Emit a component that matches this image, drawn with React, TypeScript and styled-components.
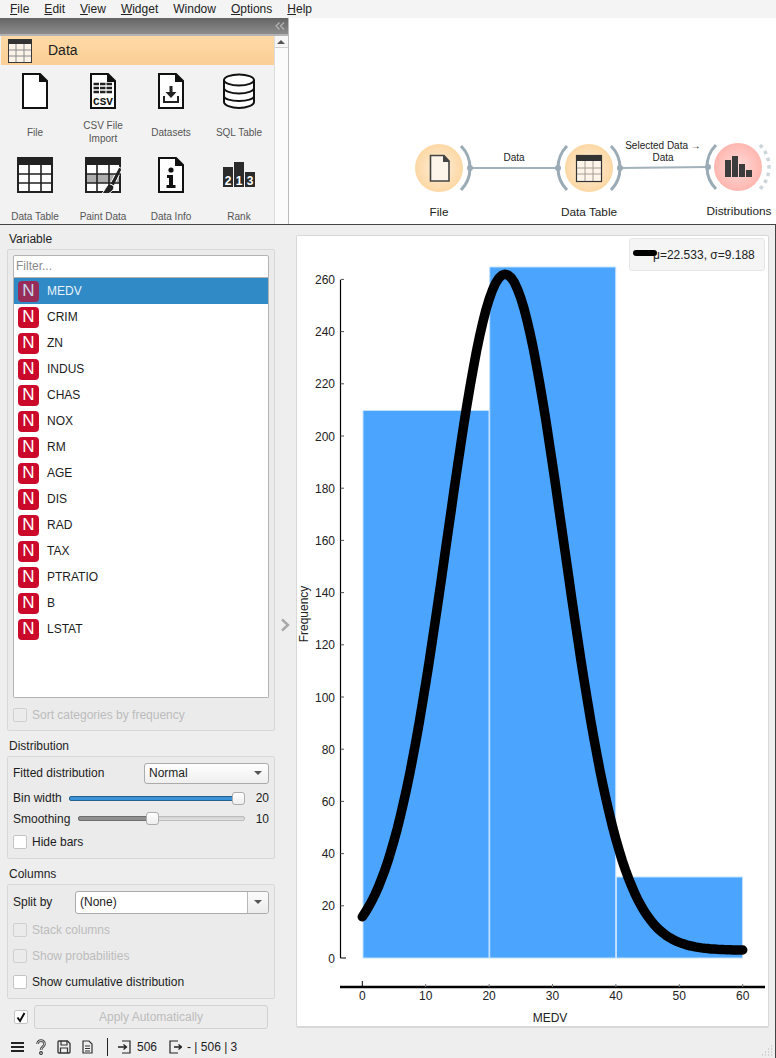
import React from 'react';
import styled, { createGlobalStyle } from 'styled-components';

const GlobalStyle = createGlobalStyle`
  html, body {
    margin: 0;
    padding: 0;
    width: 776px;
    height: 1058px;
    overflow: hidden;
    background: #eeeeee;
    font-family: "Liberation Sans", Arial, sans-serif;
    color: #1a1a1a;
  }
  * { box-sizing: border-box; }
`;

const Page = styled.div`
  width: 776px;
  height: 1058px;
  display: flex;
  flex-direction: column;
  overflow: hidden;
`;

/* ---------- menu ---------- */
const MenuBar = styled.div`
  height: 18px;
  flex: none;
  display: flex;
  align-items: center;
  gap: 15px;
  padding: 0 0 1px 10px;
  background: #f4f4f4;
  font-size: 12px;
  color: #222;
`;

const Mnemonic = styled.span`
  text-decoration: underline;
  text-underline-offset: 1px;
`;

/* ---------- main window: toolbox + canvas ---------- */
const MainRow = styled.div`
  height: 206px;
  flex: none;
  display: flex;
`;

const Dock = styled.div`
  width: 288px;
  flex: none;
  display: flex;
  flex-direction: column;
  background: #f2f2f2;
`;

const DockTitle = styled.div`
  height: 16px;
  flex: none;
  display: flex;
  align-items: center;
  justify-content: flex-end;
  padding-right: 3px;
  background: linear-gradient(#646464, #8a8a8a);
  border-bottom: 1px solid #8a8a8a;
`;

const DockBody = styled.div`
  flex: 1;
  min-height: 0;
  display: flex;
  padding-top: 2px;
  padding-left: 1px;
  background: linear-gradient(#b4b4b4 0, #b4b4b4 2px, #f2f2f2 2px);
`;

const DockContent = styled.div`
  width: 273px;
  flex: none;
  display: flex;
  flex-direction: column;
  overflow: hidden;
`;

const CategoryHeader = styled.div`
  height: 29px;
  flex: none;
  display: flex;
  align-items: center;
  gap: 16px;
  padding-left: 7px;
  background: linear-gradient(#ffd9a6, #fbcf96);
  font-size: 14px;
  color: #1c1c1c;
`;

const CategoryName = styled.span`
  margin-bottom: 2px;
`;

const WidgetGrid = styled.div`
  display: grid;
  grid-template-columns: repeat(4, 68px);
  grid-auto-rows: 84px;
`;

const WidgetButton = styled.div`
  position: relative;
  display: flex;
  flex-direction: column;
  align-items: center;
  padding-top: 8px;
`;

const WidgetLabel = styled.div`
  width: 62px;
  height: 32px;
  margin-top: 7px;
  display: flex;
  align-items: center;
  justify-content: center;
  text-align: center;
  font-size: 10px;
  line-height: 13px;
  color: #555;
`;

const Scrollbar = styled.div`
  width: 14px;
  flex: none;
  background: #fbfbfb;
  border-left: 1px solid #dcdcdc;
`;

const ScrollUp = styled.div`
  height: 12px;
  display: flex;
  align-items: center;
  justify-content: center;
  padding-right: 2px;
  background: #f6f6f6;
  border-bottom: 1px solid #d0d0d0;
`;

const ArrowUp = styled.div`
  width: 0;
  height: 0;
  border-left: 4px solid transparent;
  border-right: 4px solid transparent;
  border-bottom: 4px solid #555;
`;

const Canvas = styled.div`
  position: relative;
  flex: 1;
  background: #ffffff;
  border-left: 1px solid #bdbdbd;
  overflow: hidden;
`;

const LinkLayer = styled.svg`
  position: absolute;
  left: 0;
  top: 0;
`;

const LinkLabel = styled.div<{ $x: number; $y: number }>`
  position: absolute;
  left: ${(p) => p.$x}px;
  top: ${(p) => p.$y}px;
  transform: translateX(-50%);
  text-align: center;
  white-space: nowrap;
  font-size: 10px;
  line-height: 12px;
  color: #222;
`;

const NodeTitle = styled.div<{ $x: number; $y: number }>`
  position: absolute;
  left: ${(p) => p.$x}px;
  top: ${(p) => p.$y}px;
  transform: translateX(-50%);
  white-space: nowrap;
  font-size: 11.8px;
  line-height: 14px;
  color: #222;
`;

/* ---------- widget window ---------- */
const WidgetWindow = styled.div`
  flex: 1;
  min-height: 0;
  display: flex;
  flex-direction: column;
  background: #eeeeee;
  border-top: 1px solid #444;
  border-right: 1px solid #444;
`;

const WidgetMain = styled.div`
  flex: 1;
  min-height: 0;
  display: flex;
`;

const ControlArea = styled.div`
  width: 275px;
  flex: none;
  display: flex;
  flex-direction: column;
  padding: 6px 0 0 7px;
`;

const SectionTitle = styled.div`
  height: 17px;
  flex: none;
  padding: 0 0 2px 2px;
  display: flex;
  align-items: center;
  font-size: 12px;
  color: #222;
`;

const GroupBox = styled.div<{ $height: number }>`
  height: ${(p) => p.$height}px;
  flex: none;
  display: flex;
  flex-direction: column;
  padding: 5px 5px 0 5px;
  margin: 1px 0 7px;
  background: #ebebeb;
  border: 1px solid #d8d8d8;
  border-radius: 2px;
`;

const FilterInput = styled.div`
  height: 23px;
  flex: none;
  display: flex;
  align-items: center;
  padding: 0 0 1px 2px;
  background: #fff;
  border: 1px solid #b4b4b4;
  border-radius: 2px 2px 0 0;
  font-size: 12px;
  color: #8a8a8a;
`;

const VariableList = styled.div`
  height: 420px;
  flex: none;
  background: #fff;
  border: 1px solid #b4b4b4;
  border-top: none;
  border-radius: 0 0 2px 2px;
`;

const VariableRow = styled.div<{ $selected?: boolean }>`
  height: 26px;
  display: flex;
  align-items: center;
  gap: 8px;
  padding-left: 4px;
  font-size: 12px;
  background: ${(p) => (p.$selected ? '#2f8ac6' : '#fff')};
  color: ${(p) => (p.$selected ? '#e8f3fb' : '#1c1c1c')};
`;

const TypeBadge = styled.div<{ $selected?: boolean }>`
  width: 21px;
  height: 21px;
  flex: none;
  display: flex;
  align-items: center;
  justify-content: center;
  border-radius: 4px;
  font-family: "Liberation Sans", sans-serif;
  font-size: 17px;
  background: ${(p) => (p.$selected ? '#972c59' : '#cb0a2b')};
  color: ${(p) => (p.$selected ? '#c7d9ea' : '#ffffff')};
`;

const CheckRow = styled.div<{ $disabled?: boolean; $height?: number }>`
  height: ${(p) => p.$height ?? 26}px;
  flex: none;
  display: flex;
  align-items: center;
  gap: 5px;
  font-size: 12px;
  color: ${(p) => (p.$disabled ? '#bcbcbc' : '#1c1c1c')};
`;

const Box = styled.div<{ $disabled?: boolean }>`
  width: 14px;
  height: 14px;
  flex: none;
  display: flex;
  align-items: center;
  justify-content: center;
  border-radius: 2px;
  background: ${(p) => (p.$disabled ? '#ebebeb' : '#ffffff')};
  border: 1px solid ${(p) => (p.$disabled ? '#d0d0d0' : '#c4c4c4')};
`;

const FormRow = styled.div<{ $height: number; $after?: number }>`
  height: ${(p) => p.$height}px;
  margin-bottom: ${(p) => p.$after ?? 0}px;
  flex: none;
  display: flex;
  align-items: center;
  font-size: 12px;
  color: #1c1c1c;
`;

const RowLabel = styled.div<{ $width: number }>`
  width: ${(p) => p.$width}px;
  flex: none;
`;

const Combo = styled.div<{ $white?: boolean }>`
  flex: 1;
  height: ${(p) => (p.$white ? 23 : 21)}px;
  display: flex;
  align-items: center;
  justify-content: space-between;
  padding-left: 4px;
  background: ${(p) => (p.$white ? '#fff' : 'linear-gradient(#fefefe, #efefef)')};
  border: 1px solid #ababab;
  border-radius: 3px;
`;

const ComboArrow = styled.div<{ $divided?: boolean }>`
  width: 21px;
  align-self: stretch;
  display: flex;
  align-items: center;
  justify-content: center;
  background: ${(p) => (p.$divided ? 'linear-gradient(#fbfbfb, #ececec)' : 'transparent')};
  border-left: ${(p) => (p.$divided ? '1px solid #b8b8b8' : 'none')};
  border-radius: 0 3px 3px 0;

  &::after {
    content: '';
    border-left: 4px solid transparent;
    border-right: 4px solid transparent;
    border-top: 4px solid #555;
  }
`;

const SliderTrack = styled.div`
  position: relative;
  flex: 1;
  height: 5px;
  background: linear-gradient(#d0d0d0, #e2e2e2);
  border: 1px solid #bcbcbc;
  border-radius: 2px;
`;

const SliderFill = styled.div<{ $color: string; $edge: string }>`
  height: 5px;
  margin: -1px;
  background: ${(p) => p.$color};
  border: 1px solid ${(p) => p.$edge};
  border-radius: 2px;
`;

const SliderHandle = styled.div`
  position: absolute;
  top: -5px;
  width: 13px;
  height: 13px;
  background: linear-gradient(#ffffff, #eeeeee);
  border: 1px solid #adadad;
  border-radius: 3px;
`;

const SliderValue = styled.div`
  width: 24px;
  flex: none;
  text-align: right;
`;

const ApplyRow = styled.div`
  height: 24px;
  flex: none;
  display: flex;
  align-items: center;
  gap: 6px;
  padding-left: 7px;
  margin-top: -1px;
`;

const ApplyButton = styled.div`
  width: 234px;
  height: 24px;
  display: flex;
  align-items: center;
  justify-content: center;
  background: #ececec;
  border: 1px solid #d2d2d2;
  border-radius: 3px;
  font-size: 12px;
  color: #bcbcbc;
`;

const Splitter = styled.div`
  width: 21px;
  flex: none;
  display: flex;
  align-items: center;
  justify-content: center;
  padding: 0 2px 12px 0;
`;

const ChartColumn = styled.div`
  flex: 1;
  min-width: 0;
  padding: 10px 6px 7px 0;
  display: flex;
`;

const ChartFrame = styled.div`
  position: relative;
  width: 473px;
  height: 793px;
  background: #fff;
  border: 1px solid #d8d8d8;
  border-bottom-width: 2px;
  border-radius: 2px;
`;

const Legend = styled.div`
  position: absolute;
  top: 2px;
  right: 3px;
  width: 136px;
  height: 33px;
  display: flex;
  align-items: center;
  padding-left: 23px;
  background: #f5f5f5;
  border: 1px solid #e6e6e6;
  border-radius: 3px;
  font-size: 12px;
  color: #222;
`;

const LegendLine = styled.div`
  position: absolute;
  left: 3px;
  top: 11px;
  width: 24px;
  height: 6px;
  background: #000;
  border-radius: 3px;
`;

const StatusBar = styled.div`
  position: relative;
  height: 22px;
  flex: none;
  display: flex;
  align-items: center;
  padding-left: 11px;
  font-size: 12px;
  color: #1c1c1c;
`;

const StatusIcon = styled.svg<{ $gap: number }>`
  flex: none;
  margin-right: ${(p) => p.$gap}px;
`;

const StatusDivider = styled.div`
  width: 1px;
  height: 18px;
  flex: none;
  margin-right: 10px;
  background: #222;
`;

const StatusText = styled.span<{ $gap: number }>`
  margin-right: ${(p) => p.$gap}px;
`;

const SizeGrip = styled.svg`
  position: absolute;
  right: 2px;
  bottom: 2px;
`;

/* ---------- icons ---------- */
const Doc = ({ children }: { children?: React.ReactNode }) => (
  <svg width="36" height="36" viewBox="0 0 36 36">
    <path d="M6 1H23L30 8V35H6Z" fill="#fff" stroke="#111" strokeWidth="2" />
    <path d="M22 0L31 9H22Z" fill="#111" />
    {children}
  </svg>
);

const TableIcon = ({ children }: { children?: React.ReactNode }) => (
  <svg width="36" height="36" viewBox="0 0 36 36">
    <rect x="1" y="1" width="34" height="34" fill="#fff" stroke="#222" strokeWidth="2" />
    <rect x="0" y="0" width="36" height="8" fill="#222" />
    {children}
    <path d="M12 8V35M24 8V35M1 17H35M1 26H35" stroke="#222" strokeWidth="1.6" />
  </svg>
);

const icons: Record<string, React.ReactNode> = {
  File: <Doc />,
  CSV: (
    <Doc>
      <path d="M8.5 11H27.5M8.5 15H27.5M8.5 19H27.5" stroke="#222" strokeWidth="2.4" strokeDasharray="5.5 1" />
      <text x="18" y="32" textAnchor="middle" fontSize="11" fontWeight="700" fontFamily="Liberation Mono, monospace" fill="#111">
        CSV
      </text>
    </Doc>
  ),
  Datasets: (
    <Doc>
      <path d="M16.5 13H19.5V19H23.5L18 25L12.5 19H16.5Z" fill="#222" />
      <path d="M11 23V29H25V23" stroke="#222" strokeWidth="2" fill="none" />
    </Doc>
  ),
  SQL: (
    <svg width="36" height="36" viewBox="0 0 36 36">
      <path d="M3 7V29C3 32 10 35 18 35C26 35 33 32 33 29V7" fill="#fff" stroke="#111" strokeWidth="2" />
      <ellipse cx="18" cy="7" rx="15" ry="5.5" fill="#fff" stroke="#111" strokeWidth="2" />
      <path d="M3 15C3 18 10 20.5 18 20.5C26 20.5 33 18 33 15M3 23C3 26 10 28 18 28C26 28 33 26 33 23" fill="none" stroke="#111" strokeWidth="2" />
    </svg>
  ),
  DataTable: <TableIcon />,
  Paint: (
    <TableIcon>
      <rect x="2" y="17" width="32" height="9" fill="#aeaeae" />
      <path d="M25 27L34 10L37 12L29 29Z" fill="#222" stroke="#fff" strokeWidth="1" />
      <path d="M14 38C19 37 20 30 24 27C27 27 29 29 29 31C27 36 20 39 14 38Z" fill="#222" stroke="#fff" strokeWidth="1" />
    </TableIcon>
  ),
  Info: (
    <Doc>
      <circle cx="18" cy="13" r="2.6" fill="#111" />
      <path d="M14 18H20V28H22.5V31H13.5V28H16V21H14Z" fill="#111" />
    </Doc>
  ),
  Rank: (
    <svg width="36" height="36" viewBox="0 0 36 36">
      <rect x="2" y="10" width="10" height="20" fill="#2b2b2b" />
      <rect x="13" y="5" width="10" height="25" fill="#2b2b2b" />
      <rect x="24" y="15" width="10" height="15" fill="#2b2b2b" />
      <g fontSize="12" fontWeight="700" fill="#fff" textAnchor="middle" fontFamily="Liberation Sans, sans-serif">
        <text x="7" y="27.5">2</text>
        <text x="18" y="27.5">1</text>
        <text x="29" y="27.5">3</text>
      </g>
    </svg>
  ),
};

const widgets = [
  { key: 'File', label: 'File' },
  { key: 'CSV', label: 'CSV File Import' },
  { key: 'Datasets', label: 'Datasets' },
  { key: 'SQL', label: 'SQL Table' },
  { key: 'DataTable', label: 'Data Table' },
  { key: 'Paint', label: 'Paint Data' },
  { key: 'Info', label: 'Data Info' },
  { key: 'Rank', label: 'Rank' },
];

const variables = ['MEDV', 'CRIM', 'ZN', 'INDUS', 'CHAS', 'NOX', 'RM', 'AGE', 'DIS', 'RAD', 'TAX', 'PTRATIO', 'B', 'LSTAT'];

/* ---------- chart ---------- */
const X0 = 362.3;
const XS = 6.34;
const Y0 = 958;
const YS = 2.61;
const px = (v: number) => X0 + v * XS;
const py = (v: number) => Y0 - v * YS;

const curvePath = () => {
  const pts: string[] = [];
  for (let x = 0; x <= 60; x += 0.5) {
    const z = (x - 22.533) / 9.188;
    const y = 3 + 259 * Math.exp((-z * z) / 2);
    pts.push(`${px(x).toFixed(1)} ${py(y).toFixed(1)}`);
  }
  return 'M' + pts.join('L');
};

const Chart = () => {
  const yTicks = Array.from({ length: 14 }, (_, i) => i * 20);
  const xTicks = [0, 10, 20, 30, 40, 50, 60];
  return (
    <svg width="471" height="790" viewBox="297 236 471 790" fontFamily="Liberation Sans, Arial, sans-serif" fontSize="12" fill="#222">
      <g fill="#4ba5ff" stroke="#c4e1ff" strokeWidth="1">
        <rect x="363" y="410.5" width="126" height="547.5" />
        <rect x="489.7" y="267" width="126" height="691" />
        <rect x="616.5" y="877" width="126" height="81" />
      </g>
      <path d="M340.5 280V958" stroke="#000" strokeWidth="1.2" fill="none" />
      {yTicks.map((t) => (
        <g key={t}>
          <path d={`M340.5 ${py(t)}H${t === 0 ? 346 : 344}`} stroke={t === 0 ? '#000' : '#555'} strokeWidth="1" />
          <text x="335" y={py(t) + 4.5} textAnchor="end">{t}</text>
        </g>
      ))}
      <path d="M340 987H765" stroke="#000" strokeWidth="2.4" />
      {xTicks.map((t) => (
        <g key={t}>
          <path d={`M${px(t)} ${t === 0 ? 981 : 984}V987`} stroke={t === 0 ? '#000' : '#777'} strokeWidth="1" />
          <text x={px(t)} y="1000" textAnchor="middle">{t}</text>
        </g>
      ))}
      <text x="550" y="1022" textAnchor="middle">MEDV</text>
      <text transform="translate(308 614) rotate(-90)" textAnchor="middle">Frequency</text>
      <path d={curvePath()} fill="none" stroke="#000" strokeWidth="9.5" strokeLinecap="round" strokeLinejoin="round" />
    </svg>
  );
};

const Check = () => (
  <svg width="12" height="12" viewBox="0 0 12 12">
    <path d="M2.5 6.5L5 10L9.5 2" fill="none" stroke="#111" strokeWidth="2" />
  </svg>
);

const Slider = ({ percent, handleLeft, color, edge }: { percent: number; handleLeft: number; color: string; edge: string }) => (
  <SliderTrack>
    <SliderFill $color={color} $edge={edge} style={{ width: `${percent}%` }} />
    <SliderHandle style={{ left: handleLeft }} />
  </SliderTrack>
);

export default function App() {
  return (
    <Page>
      <GlobalStyle />
      <MenuBar>
        <span><Mnemonic>F</Mnemonic>ile</span>
        <span><Mnemonic>E</Mnemonic>dit</span>
        <span><Mnemonic>V</Mnemonic>iew</span>
        <span><Mnemonic>W</Mnemonic>idget</span>
        <span>Window</span>
        <span><Mnemonic>O</Mnemonic>ptions</span>
        <span><Mnemonic>H</Mnemonic>elp</span>
      </MenuBar>

      <MainRow>
        <Dock>
          <DockTitle>
            <svg width="10" height="8" viewBox="0 0 10 8">
              <path d="M4.5 0.5L1 4L4.5 7.5M9 0.5L5.5 4L9 7.5" fill="none" stroke="#b5b5b5" strokeWidth="1.2" />
            </svg>
          </DockTitle>
          <DockBody>
            <DockContent>
              <CategoryHeader>
                <svg width="24" height="24" viewBox="0 0 24 24">
                  <rect x="0.5" y="0.5" width="23" height="23" fill="#fbf3e8" stroke="#3a3a3a" />
                  <rect x="0" y="0" width="24" height="5" fill="#333" />
                  <path d="M8 5V23M16 5V23M1 11H23M1 17H23" stroke="#8a8a8a" strokeWidth="1" />
                </svg>
                <CategoryName>Data</CategoryName>
              </CategoryHeader>
              <WidgetGrid>
                {widgets.map((w) => (
                  <WidgetButton key={w.key}>
                    {icons[w.key]}
                    <WidgetLabel>{w.label}</WidgetLabel>
                  </WidgetButton>
                ))}
              </WidgetGrid>
            </DockContent>
            <Scrollbar>
              <ScrollUp>
                <ArrowUp />
              </ScrollUp>
            </Scrollbar>
          </DockBody>
        </Dock>

        <Canvas>
          <LinkLayer width="487" height="206" viewBox="289 18 487 206">
            <defs>
              <radialGradient id="orange">
                <stop offset="0" stopColor="#fff0dc" />
                <stop offset="1" stopColor="#fcd7a4" />
              </radialGradient>
              <radialGradient id="pink">
                <stop offset="0" stopColor="#ffdcd8" />
                <stop offset="1" stopColor="#ffb6b0" />
              </radialGradient>
            </defs>
            <path d="M470 168H558M620 168L708 167" stroke="#a2b1ba" strokeWidth="2" fill="none" />
            <circle cx="439" cy="168" r="24" fill="url(#orange)" />
            <circle cx="589" cy="168" r="24" fill="url(#orange)" />
            <circle cx="738" cy="167" r="24" fill="url(#pink)" />
            <g fill="none" stroke="#9aabb5" strokeWidth="3">
              <path d="M461 146C473 158 473 178 461 190" />
              <path d="M567 146C555 158 555 178 567 190" />
              <path d="M611 146C623 158 623 178 611 190" />
              <path d="M716 145C704 157 704 177 716 189" />
            </g>
            <path d="M760 145C772 157 772 177 760 189" fill="none" stroke="#cbd5da" strokeWidth="3.5" strokeDasharray="3.5 4" />
            <g fill="#9aabb5">
              <circle cx="470" cy="168" r="3" />
              <circle cx="558" cy="168" r="3" />
              <circle cx="620" cy="168" r="3" />
              <circle cx="708" cy="167" r="3" />
            </g>
            <path d="M430.5 155.5H444L449 161V181H430.5Z" fill="#fdf5ea" stroke="#444" strokeWidth="1.6" />
            <path d="M443 155L450 162H443Z" fill="#444" />
            <rect x="576.5" y="155.5" width="25" height="26" fill="#fdf5ea" stroke="#333" strokeWidth="1.2" />
            <rect x="576" y="155" width="26" height="6" fill="#333" />
            <path d="M585 161V181M593 161V181M577 168H601M577 174H601" stroke="#a89a92" strokeWidth="1" />
            <g fill="#3c3c3c">
              <rect x="725" y="160" width="6" height="17" />
              <rect x="732" y="156" width="6" height="21" />
              <rect x="739" y="164" width="6" height="13" />
              <rect x="746" y="170" width="6" height="7" />
            </g>
          </LinkLayer>
          <LinkLabel $x={225} $y={134}>Data</LinkLabel>
          <LinkLabel $x={374} $y={122}>Selected Data →<br />Data</LinkLabel>
          <NodeTitle $x={150} $y={187}>File</NodeTitle>
          <NodeTitle $x={300} $y={187}>Data Table</NodeTitle>
          <NodeTitle $x={450} $y={186}>Distributions</NodeTitle>
        </Canvas>
      </MainRow>

      <WidgetWindow>
        <WidgetMain>
          <ControlArea>
            <SectionTitle>Variable</SectionTitle>
            <GroupBox $height={482}>
              <FilterInput>Filter...</FilterInput>
              <VariableList>
                {variables.map((v, i) => (
                  <VariableRow key={v} $selected={i === 0}>
                    <TypeBadge $selected={i === 0}>N</TypeBadge>
                    {v}
                  </VariableRow>
                ))}
              </VariableList>
              <CheckRow $disabled $height={34}>
                <Box $disabled />
                Sort categories by frequency
              </CheckRow>
            </GroupBox>

            <SectionTitle>Distribution</SectionTitle>
            <GroupBox $height={103}>
              <FormRow $height={22} $after={4}>
                <RowLabel $width={131}>Fitted distribution</RowLabel>
                <Combo>
                  Normal
                  <ComboArrow />
                </Combo>
              </FormRow>
              <FormRow $height={20}>
                <RowLabel $width={56}>Bin width</RowLabel>
                <Slider percent={97} handleLeft={162} color="#3a93d6" edge="#24618f" />
                <SliderValue>20</SliderValue>
              </FormRow>
              <FormRow $height={21}>
                <RowLabel $width={65}>Smoothing</RowLabel>
                <Slider percent={44} handleLeft={67} color="#8f8f8f" edge="#6e6e6e" />
                <SliderValue>10</SliderValue>
              </FormRow>
              <CheckRow $height={26}>
                <Box />
                Hide bars
              </CheckRow>
            </GroupBox>

            <SectionTitle>Columns</SectionTitle>
            <GroupBox $height={115}>
              <FormRow $height={24} $after={3}>
                <RowLabel $width={62}>Split by</RowLabel>
                <Combo $white>
                  (None)
                  <ComboArrow $divided />
                </Combo>
              </FormRow>
              <CheckRow $disabled>
                <Box $disabled />
                Stack columns
              </CheckRow>
              <CheckRow $disabled>
                <Box $disabled />
                Show probabilities
              </CheckRow>
              <CheckRow>
                <Box />
                Show cumulative distribution
              </CheckRow>
            </GroupBox>

            <ApplyRow>
              <Box><Check /></Box>
              <ApplyButton>Apply Automatically</ApplyButton>
            </ApplyRow>
          </ControlArea>

          <Splitter>
            <svg width="12" height="14" viewBox="0 0 12 14">
              <path d="M3 1.5L9 7L3 12.5" fill="none" stroke="#a8a8a8" strokeWidth="2.4" />
            </svg>
          </Splitter>

          <ChartColumn>
            <ChartFrame>
              <Chart />
              <Legend>
                <LegendLine />
                μ=22.533, σ=9.188
              </Legend>
            </ChartFrame>
          </ChartColumn>
        </WidgetMain>

        <StatusBar>
          <StatusIcon $gap={12} width="13" height="12" viewBox="0 0 13 12">
            <path d="M0 2H13M0 6H13M0 10H13" stroke="#222" strokeWidth="2" />
          </StatusIcon>
          <StatusIcon $gap={11} width="10" height="16" viewBox="0 0 10 16">
            <path d="M1.5 5C1.5 0.5 8.5 0.5 8.5 5C8.5 8 5 7.5 5 11" fill="none" stroke="#444" strokeWidth="2.6" />
            <path d="M1.5 5C1.5 0.5 8.5 0.5 8.5 5C8.5 8 5 7.5 5 11" fill="none" stroke="#e4e4e4" strokeWidth="0.9" />
            <circle cx="5" cy="14" r="1.4" fill="none" stroke="#333" strokeWidth="1.1" />
          </StatusIcon>
          <StatusIcon $gap={11} width="14" height="14" viewBox="0 0 14 14">
            <path d="M2 1H10.5L13 3.5V12A1 1 0 0 1 12 13H2A1 1 0 0 1 1 12V2A1 1 0 0 1 2 1Z" fill="none" stroke="#333" strokeWidth="1.3" />
            <path d="M4 1V5H10V1M3.5 13V8H10.5V13" fill="none" stroke="#333" strokeWidth="1.2" />
          </StatusIcon>
          <StatusIcon $gap={14} width="11" height="14" viewBox="0 0 11 14">
            <path d="M1 1H7L10 4V13H1Z" fill="none" stroke="#333" strokeWidth="1.2" />
            <path d="M3 6H8M3 8.5H8M3 11H8" stroke="#333" strokeWidth="1" />
          </StatusIcon>
          <StatusDivider />
          <StatusIcon $gap={6} width="13" height="14" viewBox="0 0 13 14">
            <path d="M4 1H12V13H4" fill="none" stroke="#222" strokeWidth="1.2" />
            <path d="M0 7H8M5.5 4.5L8.5 7L5.5 9.5" fill="none" stroke="#222" strokeWidth="1.3" />
          </StatusIcon>
          <StatusText $gap={12}>506</StatusText>
          <StatusIcon $gap={5} width="13" height="14" viewBox="0 0 13 14">
            <path d="M9 1H1V13H9" fill="none" stroke="#222" strokeWidth="1.2" />
            <path d="M5 7H12M9.5 4.5L12.5 7L9.5 9.5" fill="none" stroke="#222" strokeWidth="1.3" />
          </StatusIcon>
          <StatusText $gap={0}>- | 506 | 3</StatusText>
          <SizeGrip width="12" height="12" viewBox="0 0 12 12">
            <path d="M10 2H11M10 5H11M7 5H8M10 8H11M7 8H8M4 8H5M10 11H11M7 11H8M4 11H5M1 11H2" stroke="#b5b5b5" strokeWidth="1" />
          </SizeGrip>
        </StatusBar>
      </WidgetWindow>
    </Page>
  );
}
